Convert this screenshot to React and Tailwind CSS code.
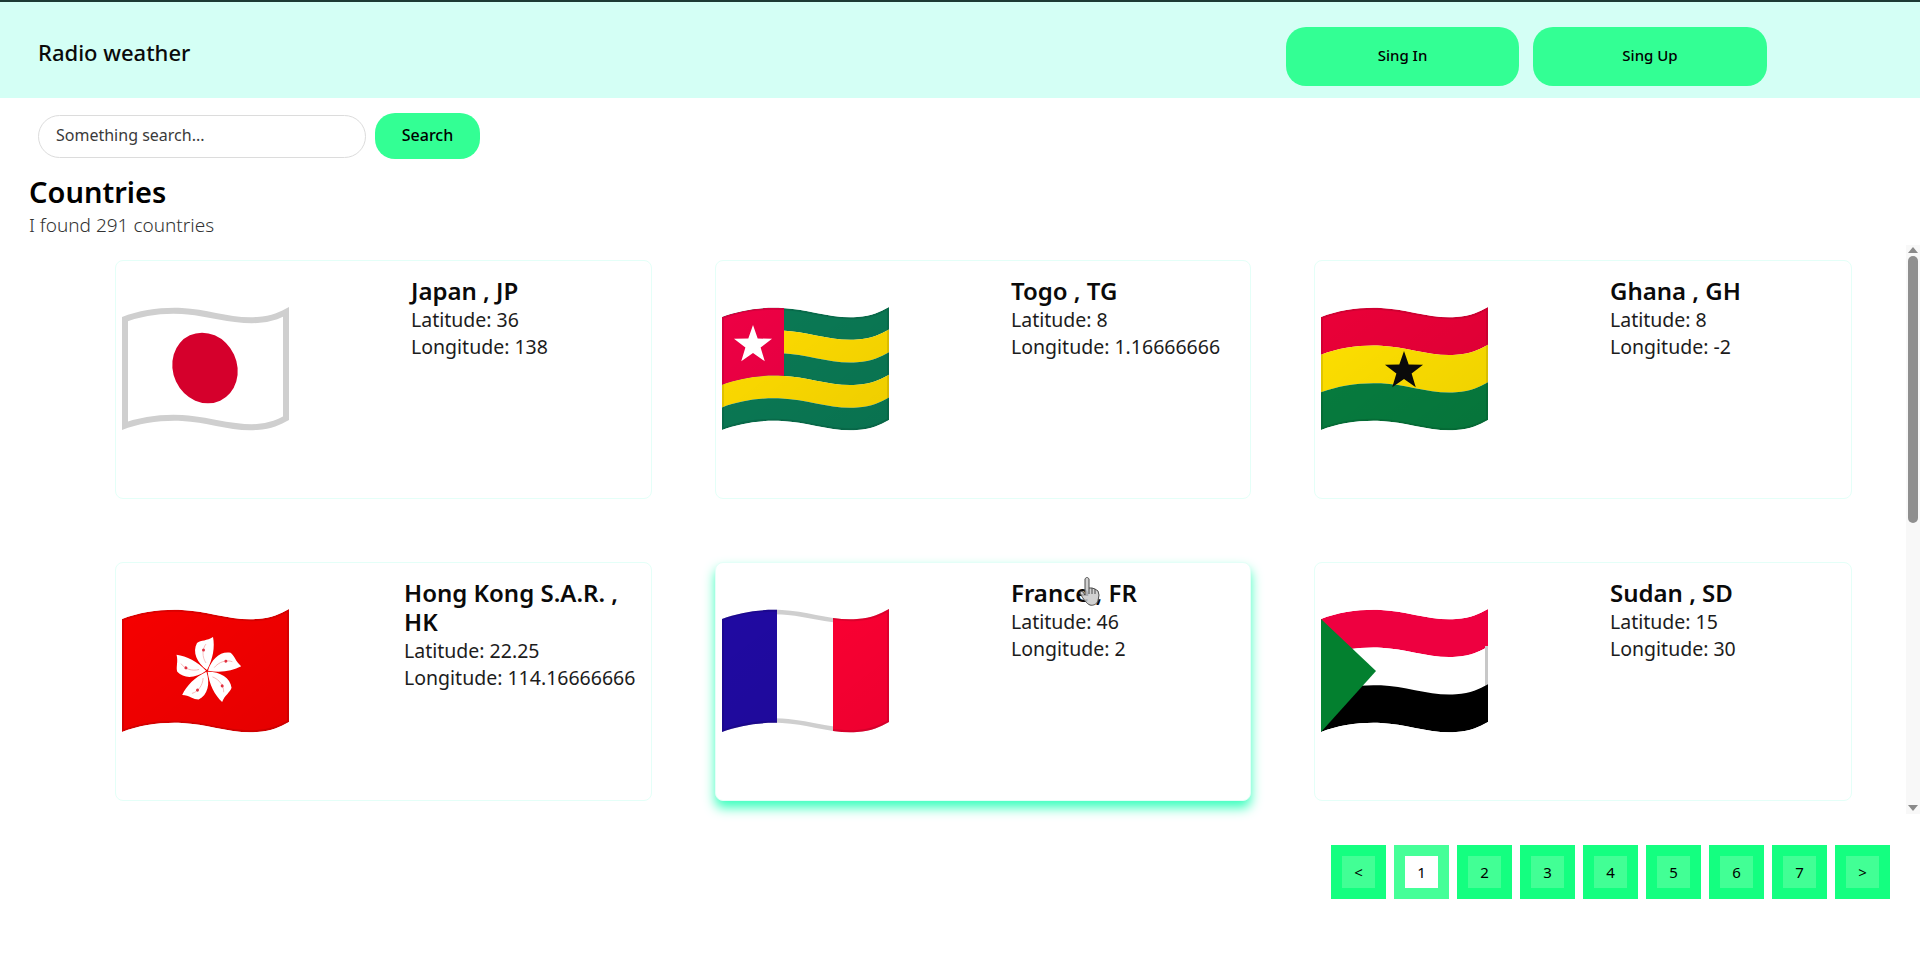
import React from "react";

const FONT = { fontFamily: '"Noto Sans", sans-serif' };

// flag cloth between two horizontal wave lines
function band(a, b) {
  return `M0 ${11 + a} C18 ${4 + a} 40 ${1 + a} 60 ${2 + a} C85 ${3 + a} 110 ${13 + a} 135 ${11 + a} C150 ${10 + a} 158 ${6 + a} 167 ${1 + a} L167 ${1 + b} C158 ${6 + b} 150 ${10 + b} 135 ${11 + b} C110 ${13 + b} 85 ${3 + b} 60 ${2 + b} C40 ${1 + b} 18 ${4 + b} 0 ${11 + b} Z`;
}

const CLOTH = band(0, 113);

function Flag({ id, children }) {
  return (
    <svg width="167" height="126" viewBox="0 0 167 126" className="shrink-0">
      <defs>
        <clipPath id={`clip-${id}`}>
          <path d={CLOTH} />
        </clipPath>
        <linearGradient id={`shade-${id}`} x1="0" y1="0" x2="1" y2="1">
          <stop offset="0" stopColor="#000" stopOpacity="0" />
          <stop offset="1" stopColor="#000" stopOpacity="0.07" />
        </linearGradient>
      </defs>
      <g clipPath={`url(#clip-${id})`}>{children}</g>
    </svg>
  );
}

// soft dark rim + diagonal shade that the emoji flags have
function Shade({ id }) {
  return (
    <>
      <path d={CLOTH} fill={`url(#shade-${id})`} />
      <path d={CLOTH} fill="none" stroke="#000" strokeOpacity="0.1" strokeWidth="4" />
    </>
  );
}

function Star({ cx, cy, r, fill }) {
  const pts = [];
  for (let i = 0; i < 10; i++) {
    const rad = i % 2 === 0 ? r : r * 0.4;
    const ang = -Math.PI / 2 + (i * Math.PI) / 5;
    pts.push(`${cx + rad * Math.cos(ang)},${cy + rad * Math.sin(ang)}`);
  }
  return <polygon points={pts.join(" ")} fill={fill} />;
}

function JapanFlag() {
  return (
    <Flag id="jp">
      <path d={CLOTH} fill="#fff" stroke="#cfcfcf" strokeWidth="12" />
      <ellipse cx="83" cy="62" rx="32" ry="36" fill="#d5002c" transform="rotate(-25 83 62)" />
    </Flag>
  );
}

function TogoFlag() {
  const s = 113 / 5;
  return (
    <Flag id="tg">
      <path d={band(0, s)} fill="#0a7a55" />
      <path d={band(s, s * 2)} fill="#ffdc00" />
      <path d={band(s * 2, s * 3)} fill="#0a7a55" />
      <path d={band(s * 3, s * 4)} fill="#ffdc00" />
      <path d={band(s * 4, s * 5)} fill="#0a7a55" />
      <clipPath id="tg-canton">
        <rect x="0" y="0" width="62" height="100" />
      </clipPath>
      <path d={band(0, s * 3)} fill="#ee0044" clipPath="url(#tg-canton)" />
      <Shade id="tg" />
      <Star cx={31} cy={39} r={20} fill="#fff" />
    </Flag>
  );
}

function GhanaFlag() {
  const s = 113 / 3;
  return (
    <Flag id="gh">
      <path d={band(0, s)} fill="#ea0038" />
      <path d={band(s, s * 2)} fill="#ffe000" />
      <path d={band(s * 2, s * 3)} fill="#067d3f" />
      <Shade id="gh" />
      <Star cx={83} cy={65} r={20} fill="#0a0a0a" />
    </Flag>
  );
}

function Petal({ angle }) {
  return (
    <g transform={`rotate(${angle})`}>
      <path d="M0 -1 C-10 -8 -15 -19 -10 -28 C-6 -31 0 -30 6 -34 C8 -24 6 -12 0 -1Z" fill="#fff" />
      <path d="M-1 -8 C-5 -14 -5 -22 -1 -27" fill="none" stroke="#f8b0b0" strokeWidth="0.8" />
      <circle cx="-3.5" cy="-21" r="1.5" fill="#e03040" />
    </g>
  );
}

function HongKongFlag() {
  return (
    <Flag id="hk">
      <path d={CLOTH} fill="#f60000" />
      <Shade id="hk" />
      <g transform="translate(85 63)">
        {[0, 72, 144, 216, 288].map((a) => (
          <Petal key={a} angle={a} />
        ))}
      </g>
    </Flag>
  );
}

function FranceFlag() {
  return (
    <Flag id="fr">
      <path d={CLOTH} fill="#fff" stroke="#cfcfcf" strokeWidth="9" />
      <clipPath id="fr-sides">
        <rect x="0" y="0" width="55" height="126" />
        <rect x="111" y="0" width="56" height="126" />
      </clipPath>
      <rect x="0" y="0" width="55" height="126" fill="#200aa2" />
      <rect x="111" y="0" width="56" height="126" fill="#ff0033" />
      <g clipPath="url(#fr-sides)">
        <Shade id="fr" />
      </g>
    </Flag>
  );
}

function SudanFlag() {
  const s = 113 / 3;
  return (
    <Flag id="sd">
      <path d={band(0, s)} fill="#ee0040" />
      <path d={band(s, s * 2)} fill="#fff" />
      <rect x="164" y="38" width="3" height="40" fill="#c8c8c8" />
      <path d={band(s * 2, s * 3)} fill="#000" />
      <polygon points="0,11 55,63 0,124" fill="#03802f" />
    </Flag>
  );
}

const countries = [
  { name: "Japan , JP", lat: "36", lon: "138", flag: <JapanFlag /> },
  { name: "Togo , TG", lat: "8", lon: "1.16666666", flag: <TogoFlag /> },
  { name: "Ghana , GH", lat: "8", lon: "-2", flag: <GhanaFlag /> },
  { name: "Hong Kong S.A.R. , HK", lat: "22.25", lon: "114.16666666", flag: <HongKongFlag />, wide: true },
  { name: "France , FR", lat: "46", lon: "2", flag: <FranceFlag />, hover: true },
  { name: "Sudan , SD", lat: "15", lon: "30", flag: <SudanFlag /> },
];

function CountryCard({ country }) {
  return (
    <div
      className={`relative flex h-[239px] rounded-lg border border-[#e4fff8] bg-white pl-[6px] ${
        country.hover ? "shadow-[0_7px_12px_0_#3dffbe]" : ""
      }`}
    >
      <div className="mt-[45px]">{country.flag}</div>
      <div className={`pt-[15px] ${country.wide ? "ml-[115px]" : "ml-[122px]"}`}>
        <h3 className="mb-[1px] text-[24px] leading-[29px] font-semibold text-[#0a0a0a]">{country.name}</h3>
        <p className="text-[19.5px] leading-[27px] text-[#1c1c1c]">Latitude: {country.lat}</p>
        <p className="text-[19.5px] leading-[27px] text-[#1c1c1c]">Longitude: {country.lon}</p>
      </div>
    </div>
  );
}

function PageButton({ label, active }) {
  return (
    <div
      className={`flex h-[54px] w-[55px] items-center justify-center ${
        active ? "bg-[#45ff98]" : "bg-[#14ff80]"
      }`}
    >
      <span
        className={`flex h-[32px] w-[33px] items-center justify-center text-[15px] text-black ${
          active ? "bg-white" : "bg-[#42ff95]"
        }`}
      >
        {label}
      </span>
    </div>
  );
}

function Cursor() {
  return (
    <svg
      width="26"
      height="30"
      viewBox="0 0 26 30"
      className="absolute left-[1078px] top-[577px]"
    >
      <path
        d="M7 2 C8 0 10 0 11 2 L11 11 L14 11 L17 12 L20 14 L21 18 L20 24 C19 27 15 29 12 28 C9 27 5 22 2 16 C2 14 4 14 5 15 L7 18 Z"
        fill="#c9c9c9"
        fillOpacity="0.85"
        stroke="#4a4a4a"
        strokeWidth="1"
      />
      <path d="M11 11 L11 17 M14 11 L14 17 M17 12 L17 17" stroke="#4a4a4a" strokeWidth="1" fill="none" />
    </svg>
  );
}

export default function App() {
  return (
    <div className="h-[961px] w-full overflow-hidden bg-white" style={FONT}>
      <header className="flex h-[98px] items-start justify-between border-t-2 border-[#1c3a34] bg-[#d4fff5] pt-[25px] pr-[153px] pl-[38px]">
        <span className="mt-[10px] text-[22px] leading-[30px] font-medium text-[#0a0a0a]">Radio weather</span>
        <div className="flex gap-[14px]">
          <button className="h-[59px] w-[233px] rounded-[20px] bg-[#33ff94] pb-[2px] text-[15px] font-medium text-black">
            Sing In
          </button>
          <button className="h-[59px] w-[234px] rounded-[20px] bg-[#33ff94] pb-[2px] text-[15px] font-medium text-black">
            Sing Up
          </button>
        </div>
      </header>

      <div className="mt-[15px] flex items-center gap-[9px] pl-[38px]">
        <input
          className="h-[43px] w-[328px] rounded-[22px] border border-[#dcdcdc] bg-white px-[17px] pb-[2px] text-[16px] text-[#333] placeholder:text-[#3a3a3a]"
          placeholder="Something search..."
        />
        <button className="h-[46px] w-[105px] rounded-[20px] bg-[#33ff94] pb-[2px] text-[16px] font-medium text-black">
          Search
        </button>
      </div>

      <div className="pl-[29px]">
        <h1 className="mt-[14px] text-[29px] leading-[37px] font-semibold text-black">Countries</h1>
        <p className="mt-[1px] text-[19px] leading-[28px] font-light text-[#333]">I found 291 countries</p>
      </div>

      <div className="mt-[6px] flex h-[569px]">
        <main className="flex-1 pt-[15px] pl-[115px]">
          <div className="grid grid-cols-[537px_536px_538px] gap-x-[63px] gap-y-[63px]">
            {countries.map((c) => (
              <CountryCard key={c.name} country={c} />
            ))}
          </div>
        </main>
        <div className="flex w-[14px] flex-col items-center bg-[#f8f8f8]">
          <div className="mt-[2px] h-0 w-0 border-x-[5px] border-b-[6px] border-x-transparent border-b-[#8a8a8a]" />
          <div className="mt-[3px] h-[267px] w-[10px] rounded-[5px] bg-[#8f8f8f]" />
          <div className="mt-auto mb-[3px] h-0 w-0 border-x-[5px] border-t-[6px] border-x-transparent border-t-[#8a8a8a]" />
        </div>
      </div>

      <Cursor />

      <nav className="mt-[31px] flex justify-end gap-[8px] pr-[30px]">
        {["<", "1", "2", "3", "4", "5", "6", "7", ">"].map((p) => (
          <PageButton key={p} label={p} active={p === "1"} />
        ))}
      </nav>
    </div>
  );
}
